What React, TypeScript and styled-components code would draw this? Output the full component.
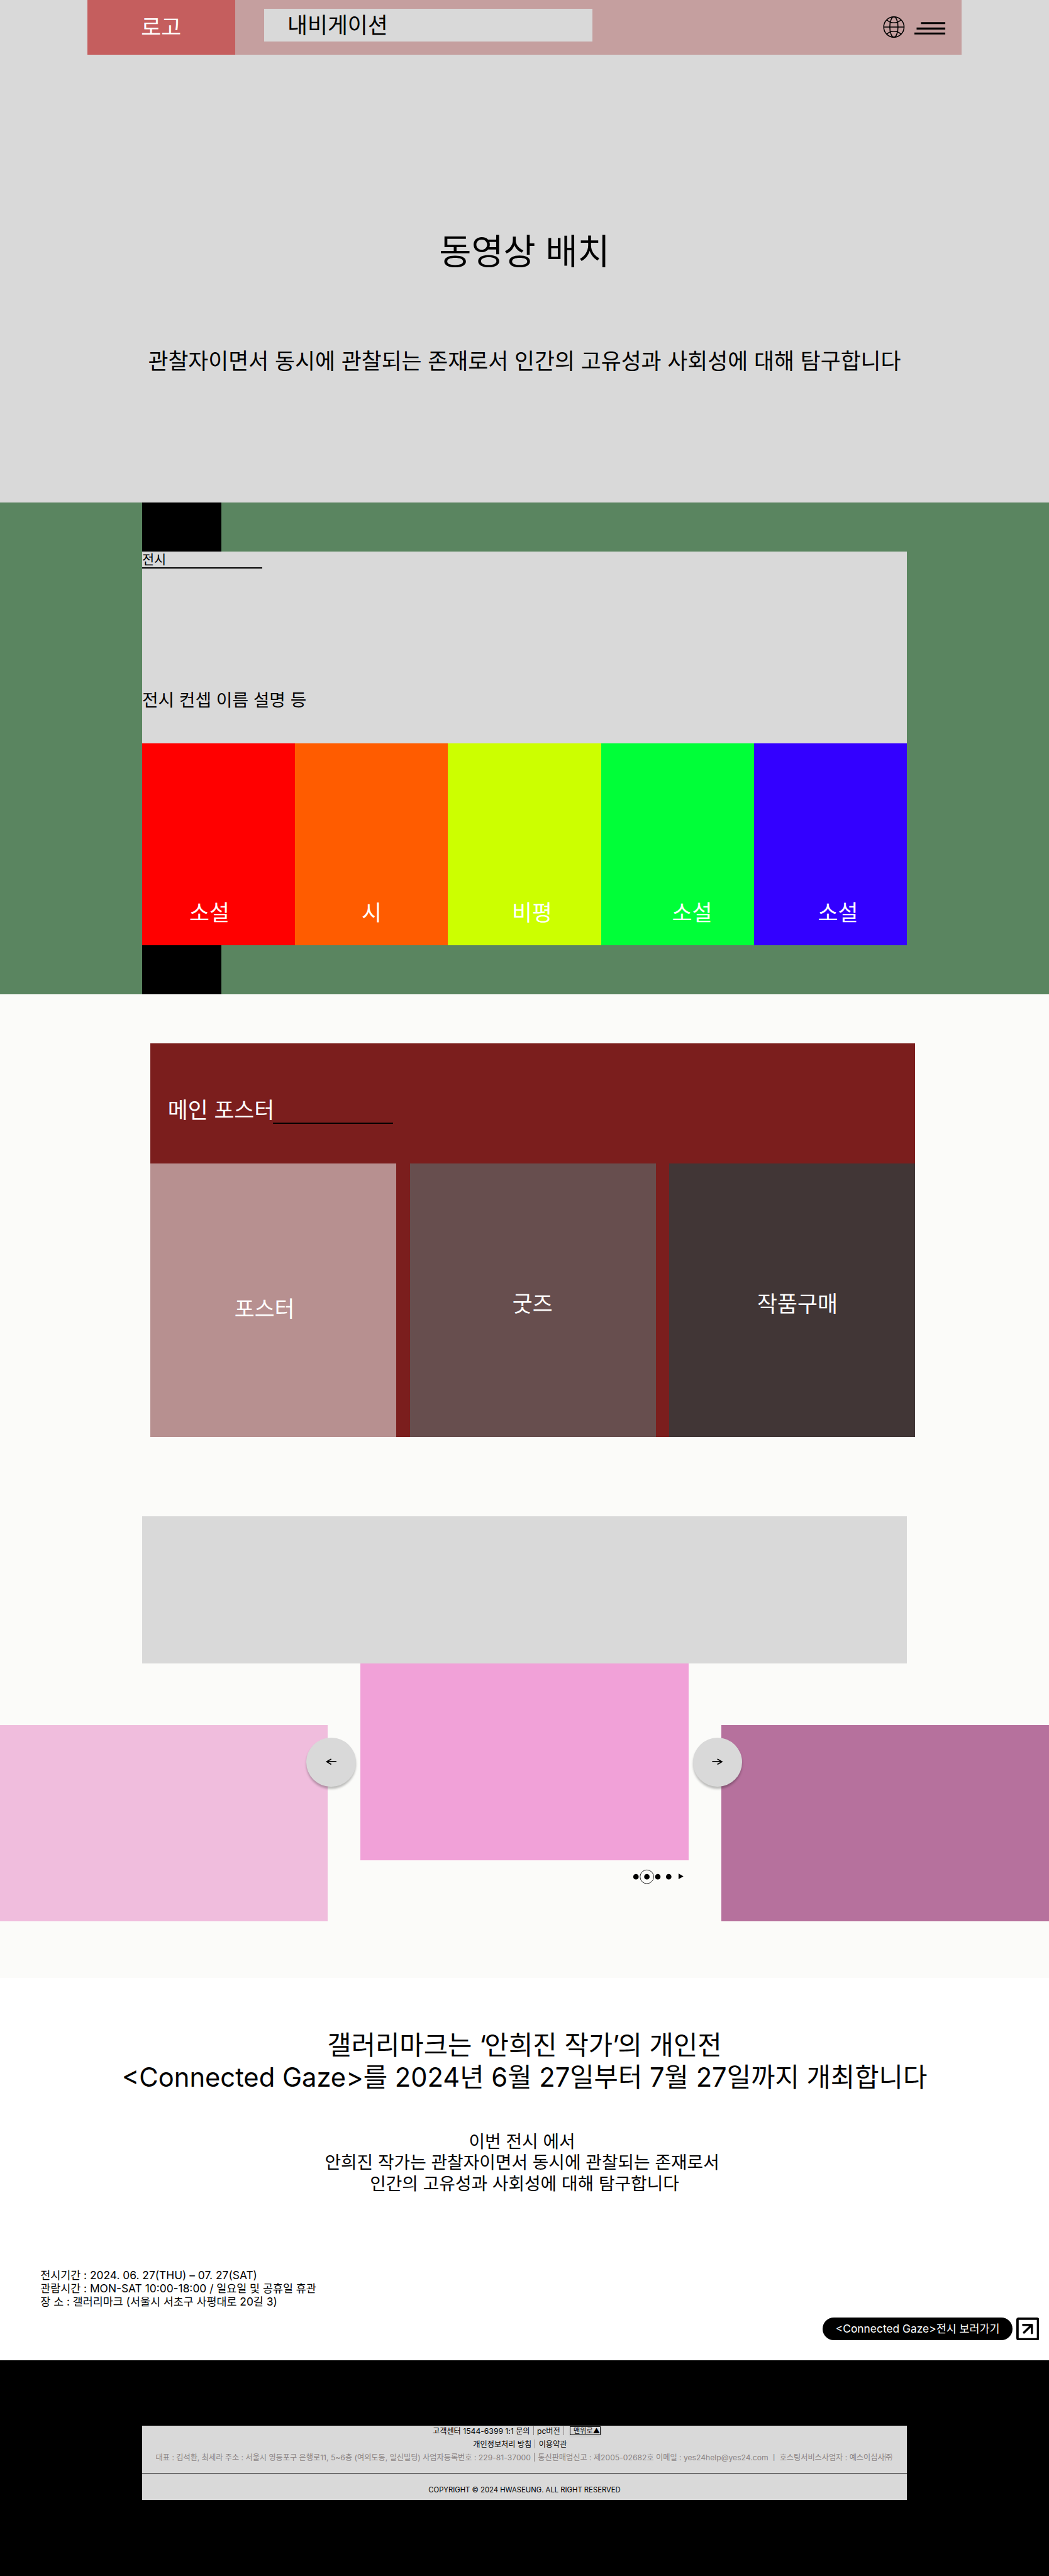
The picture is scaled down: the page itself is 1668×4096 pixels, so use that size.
import React from "react";
import styled, { createGlobalStyle } from "styled-components";

const SCALE = 1668 / 1920;
const u = (n: number) => `${+(n * SCALE).toFixed(3)}px`;

const GlobalStyle = createGlobalStyle`
  *, *::before, *::after { box-sizing: border-box; }
  body {
    margin: 0;
    background: #fbfbf9;
    font-family: Inter, "Noto Sans CJK KR", sans-serif;
    color: #000;
  }
  h1, h2, p { margin: 0; font-weight: 400; }
`;

const Page = styled.div`
  width: ${u(1920)};
  height: 4096px;
  overflow: hidden;
  display: flex;
  flex-direction: column;
`;

const Text = styled.p<{ $size: number; $color?: string }>`
  font-size: ${(p) => u(p.$size)};
  line-height: ${(p) => u(p.$size * 1.21)};
  color: ${(p) => p.$color ?? "#000"};
  white-space: pre;
`;

/* Hero */
const Hero = styled.section`
  height: ${u(920)};
  flex: none;
  background: #d9d9d9;
  display: flex;
  flex-direction: column;
  align-items: center;
`;

const Header = styled.header`
  width: ${u(1600)};
  height: ${u(100)};
  background: #c59f9f;
  display: flex;
  align-items: flex-start;
`;

const Logo = styled.div`
  width: ${u(270)};
  height: 100%;
  background: #c55e5e;
  display: flex;
  align-items: center;
  justify-content: center;
`;

const Nav = styled.nav`
  width: ${u(600)};
  height: ${u(60)};
  margin: ${u(16)} 0 0 ${u(54)};
  padding: ${u(6)} 0 0 ${u(42)};
  background: #d9d9d9;
`;

const HeaderTools = styled.div`
  margin: ${u(30)} ${u(29)} 0 auto;
  display: flex;
  align-items: flex-start;
  gap: ${u(18)};
  svg { display: block; }
`;

const HeroTitle = styled(Text).attrs({ as: "h1" })`
  margin-top: ${u(321)};
`;

const HeroCopy = styled(Text)`
  margin-top: ${u(138)};
`;

/* Exhibition */
const Exhibition = styled.section`
  height: ${u(900)};
  flex: none;
  padding: 0 ${u(260)};
  background: #5a8560;
`;

const BlackBlock = styled.div`
  width: ${u(145)};
  height: ${u(90)};
  background: #000;
`;

const ExhibitionPanel = styled.div`
  height: ${u(350)};
  background: #d9d9d9;
  display: flex;
  flex-direction: column;
`;

const ExhibitionTitle = styled.div`
  width: ${u(220)};
  height: ${u(30)};
  border-bottom: 2px solid #000;
`;

const ExhibitionCopy = styled(Text)`
  margin-top: ${u(223)};
`;

const GenreRow = styled.div`
  display: grid;
  grid-template-columns: repeat(5, 1fr);
  height: ${u(370)};
`;

const Genre = styled.div<{ $bg: string; $indent: number }>`
  background: ${(p) => p.$bg};
  padding: ${u(285.5)} 0 0 ${(p) => u(p.$indent)};
`;

/* Posters */
const Posters = styled.section`
  width: ${u(1400)};
  height: ${u(720)};
  flex: none;
  margin: ${u(90)} 0 0 ${u(275)};
  background: #7b1e1d;
`;

const PostersHead = styled.div`
  height: ${u(220)};
  padding: ${u(98)} 0 0 ${u(32)};
  display: flex;
  align-items: flex-start;
`;

const HeadRule = styled.span`
  width: ${u(220)};
  height: 2px;
  margin: ${u(47)} 0 0 0;
  background: #000;
`;

const HeadLabel = styled.div`
  width: ${u(193)};
`;

const PosterRow = styled.div`
  display: flex;
  height: ${u(500)};
`;

const PosterCard = styled.div<{ $bg: string; $top: number; $left: number; $gap?: number }>`
  width: ${u(450)};
  margin-left: ${(p) => u(p.$gap ?? 0)};
  padding: ${(p) => u(p.$top)} 0 0 ${(p) => u(p.$left)};
  background: ${(p) => p.$bg};
`;

/* Carousel */
const Banner = styled.div`
  width: ${u(1400)};
  height: ${u(270)};
  flex: none;
  margin: ${u(145)} auto 0;
  background: #d9d9d9;
`;

const Carousel = styled.section`
  position: relative;
  height: ${u(575)};
  flex: none;
  display: flex;
  justify-content: space-between;
  align-items: flex-start;
`;

const Slide = styled.div<{ $bg: string; $drop?: boolean }>`
  width: ${u(600)};
  height: ${u(360)};
  margin-top: ${(p) => u(p.$drop ? 112 : 0)};
  background: ${(p) => p.$bg};
`;

const CenterColumn = styled.div`
  width: ${u(600)};
`;

const RoundButton = styled.button<{ $left: number }>`
  position: absolute;
  top: ${u(135)};
  left: ${(p) => u(p.$left)};
  width: ${u(90)};
  height: ${u(90)};
  padding: 0;
  border: 0;
  border-radius: 50%;
  background: #d9d9d9;
  box-shadow: 0 ${u(4)} ${u(4)} rgba(0, 0, 0, 0.25);
  display: flex;
  align-items: center;
  justify-content: center;
`;

const Pager = styled.div`
  display: flex;
  justify-content: flex-end;
  margin: ${u(16)} ${u(8)} 0 0;
  svg { display: block; }
`;

/* About */
const About = styled.section`
  height: ${u(700)};
  flex: none;
  padding-top: ${u(95)};
  background: #fff;
  text-align: center;
`;

const Quote = styled.span`
  letter-spacing: ${u(-2.8)};
`;

const AboutCopy = styled.div`
  margin-top: ${u(69.5)};
`;

const Info = styled.div`
  margin: ${u(135.5)} 0 0 ${u(74)};
  text-align: left;
`;

const LinkRow = styled.div`
  display: flex;
  justify-content: flex-end;
  gap: ${u(7)};
  margin: ${u(16.5)} ${u(18)} 0 0;
  svg { display: block; }
`;

const Pill = styled.a`
  width: ${u(347)};
  height: ${u(42)};
  border-radius: ${u(21)};
  background: #000;
  display: flex;
  justify-content: center;
  padding-top: ${u(8)};
`;

/* Footer */
const Footer = styled.footer`
  flex: 1;
  padding: ${u(120)} ${u(260)} 0;
  background: #000;
`;

const FooterPanel = styled.div`
  height: ${u(135)};
  background: #d9d9d9;
  text-align: center;
`;

const FooterInfo = styled.div`
  height: ${u(87)};
  border-bottom: 1px solid #000;
`;

const FooterLine = styled.div<{ $color?: string; $shift?: number }>`
  height: ${u(24)};
  display: flex;
  align-items: flex-start;
  padding-left: ${(p) => u(p.$shift ?? 0)};
  font-size: ${u(14)};
  line-height: ${u(20)};
  color: ${(p) => p.$color ?? "#000"};
  white-space: pre;
`;

const Divider = styled.i`
  width: 1px;
  height: ${u(16)};
  margin: ${u(1)} ${u(6)} 0;
  background: #8a8383;
`;

const TopButton = styled.button`
  width: ${u(57)};
  height: ${u(17)};
  margin: ${u(0.5)} 0 0 ${u(4)};
  padding: 0 0 0 ${u(6)};
  border: 1px solid #000;
  background: #d9d9d9;
  box-shadow: 0 ${u(4)} ${u(4)} rgba(0, 0, 0, 0.08);
  font: inherit;
  font-size: ${u(13)};
  line-height: ${u(15)};
  display: flex;
  align-items: center;
  justify-content: center;
  white-space: pre;
`;

const Copyright = styled(Text)`
  margin-top: ${u(23.5)};
`;

const GlobeIcon = () => (
  <svg width={40 * SCALE} height={40 * SCALE} viewBox="0 0 40 40" fill="none" stroke="#000" strokeWidth="1.8">
    <circle cx="20" cy="19.5" r="18.6" />
    <ellipse cx="20" cy="19.5" rx="7.5" ry="18.6" />
    <path d="M1.4 19.5h37.2M7 6.3c3.4 3.7 8 5.4 13 5.4s9.6-1.7 13-5.4M7 32.700c3.4-3.7 8-5.4 13-5.4s9.6 1.7 13 5.4" />
  </svg>
);

const MenuIcon = () => (
  <svg width={57 * SCALE} height={24 * SCALE} viewBox="0 0 57 24" style={{ marginTop: 10 * SCALE }}>
    <path d="M12 2h44.5M4 12h52.5M0 21h56.5" stroke="#000" strokeWidth="3.6" />
  </svg>
);

const ArrowIcon = ({ flip }: { flip?: boolean }) => (
  <svg
    width={20 * SCALE}
    height={12 * SCALE}
    viewBox="0 0 20 12"
    fill="none"
    stroke="#000"
    strokeWidth="2"
    transform={flip ? "scale(-1 1)" : undefined}
  >
    <path d="M0.5 6h17.5M10 1.2L18.3 6L10 10.8" />
  </svg>
);

const PagerIcon = () => (
  <svg width={94 * SCALE} height={28 * SCALE} viewBox="0 0 94 28">
    <circle cx="6" cy="14" r="5" />
    <circle cx="26" cy="14" r="5" />
    <circle cx="46" cy="14" r="5" />
    <circle cx="66" cy="14" r="5" />
    <circle cx="26" cy="14" r="12.5" fill="none" stroke="#000" />
    <path d="M84 8v10.5l9-5.25z" />
  </svg>
);

const OpenIcon = () => (
  <svg width={42 * SCALE} height={42 * SCALE} viewBox="0 0 42 42" fill="none" stroke="#000" strokeWidth="4">
    <rect x="2.2" y="2.2" width="37.6" height="37.6" rx="2" strokeWidth="4.4" />
    <path d="M12.5 13.5H28.5V28.500M28 14L14 27.500" strokeLinecap="round" strokeLinejoin="round" />
  </svg>
);

const genres = [
  { label: "소설", bg: "#ff0000", indent: 86.5 },
  { label: "시", bg: "#ff5c00", indent: 122 },
  { label: "비평", bg: "#ccff00", indent: 117 },
  { label: "소설", bg: "#00ff38", indent: 130 },
  { label: "소설", bg: "#3300ff", indent: 117 },
];

const posters = [
  { label: "포스터", bg: "#b79090", top: 241.5, left: 154, gap: 0 },
  { label: "굿즈", bg: "#674e4e", top: 232, left: 187, gap: 26 },
  { label: "작품구매", bg: "#413636", top: 232, left: 161, gap: 24 },
];

export default function App() {
  return (
    <Page>
      <GlobalStyle />
      <Hero>
        <Header>
          <Logo>
            <Text $size={40} $color="#fff">로고</Text>
          </Logo>
          <Nav>
            <Text $size={40}>내비게이션</Text>
          </Nav>
          <HeaderTools>
            <GlobeIcon />
            <MenuIcon />
          </HeaderTools>
        </Header>
        <HeroTitle $size={64}>동영상 배치</HeroTitle>
        <HeroCopy $size={40}>
          관찰자이면서 동시에 관찰되는 존재로서 인간의 고유성과 사회성에 대해 탐구합니다
        </HeroCopy>
      </Hero>

      <Exhibition>
        <BlackBlock />
        <ExhibitionPanel>
          <ExhibitionTitle>
            <Text $size={24}>전시</Text>
          </ExhibitionTitle>
          <ExhibitionCopy $size={32}>전시 컨셉 이름 설명 등</ExhibitionCopy>
        </ExhibitionPanel>
        <GenreRow>
          {genres.map((g, i) => (
            <Genre key={i} $bg={g.bg} $indent={g.indent}>
              <Text $size={40} $color="#fff">{g.label}</Text>
            </Genre>
          ))}
        </GenreRow>
        <BlackBlock />
      </Exhibition>

      <Posters>
        <PostersHead>
          <HeadLabel>
            <Text $size={40} $color="#fff">메인 포스터</Text>
          </HeadLabel>
          <HeadRule />
        </PostersHead>
        <PosterRow>
          {posters.map((p) => (
            <PosterCard key={p.label} $bg={p.bg} $top={p.top} $left={p.left} $gap={p.gap}>
              <Text $size={40} $color="#fff">{p.label}</Text>
            </PosterCard>
          ))}
        </PosterRow>
      </Posters>

      <Banner />
      <Carousel>
        <Slide $bg="#f0bddd" $drop />
        <CenterColumn>
          <Slide $bg="#f1a1d8" />
          <Pager>
            <PagerIcon />
          </Pager>
        </CenterColumn>
        <Slide $bg="#b6719d" $drop />
        <RoundButton $left={561}>
          <ArrowIcon flip />
        </RoundButton>
        <RoundButton $left={1268.5}>
          <ArrowIcon />
        </RoundButton>
      </Carousel>

      <About>
        <Text $size={48}>
          갤러리마크는 <Quote>‘</Quote>안희진 작가<Quote>’</Quote>의 개인전
        </Text>
        <Text $size={48}>{"<Connected Gaze>를 2024년 6월 27일부터 7월 27일까지 개최합니다"}</Text>
        <AboutCopy>
          <Text $size={32}>{"이번 전시 에서 "}</Text>
          <Text $size={32}>{"안희진 작가는 관찰자이면서 동시에 관찰되는 존재로서 "}</Text>
          <Text $size={32}>인간의 고유성과 사회성에 대해 탐구합니다</Text>
        </AboutCopy>
        <Info>
          <Text $size={20}>전시기간 : 2024. 06. 27(THU) – 07. 27(SAT)</Text>
          <Text $size={20}>관람시간 : MON-SAT 10:00-18:00 / 일요일 및 공휴일 휴관</Text>
          <Text $size={20}>장 소 : 갤러리마크 (서울시 서초구 사평대로 20길 3)</Text>
        </Info>
        <LinkRow>
          <Pill>
            <Text $size={20} $color="#fff">{"<Connected Gaze>전시 보러가기"}</Text>
          </Pill>
          <OpenIcon />
        </LinkRow>
      </About>

      <Footer>
        <FooterPanel>
          <FooterInfo>
            <FooterLine $shift={532}>
              고객센터 1544-6399 1:1 문의
              <Divider />
              pc버전
              <Divider />
              <TopButton>맨위로▲</TopButton>
            </FooterLine>
            <FooterLine $shift={606}>
              개인정보처리 방침
              <Divider />
              이용약관
            </FooterLine>
            <FooterLine $shift={25} $color="#8a8383">
              대표 : 김석환, 최세라 주소 : 서울시 영등포구 은행로11, 5~6층 (여의도동, 일신빌딩) 사업자등록번호 : 229-81-37000
              <Divider />
              통신판매업신고 : 제2005-02682호 이메일 : yes24help@yes24.com ㅣ 호스팅서비스사업자 : 예스이십사㈜
            </FooterLine>
          </FooterInfo>
          <Copyright $size={13}>COPYRIGHT © 2024 HWASEUNG. ALL RIGHT RESERVED</Copyright>
        </FooterPanel>
      </Footer>
    </Page>
  );
}
